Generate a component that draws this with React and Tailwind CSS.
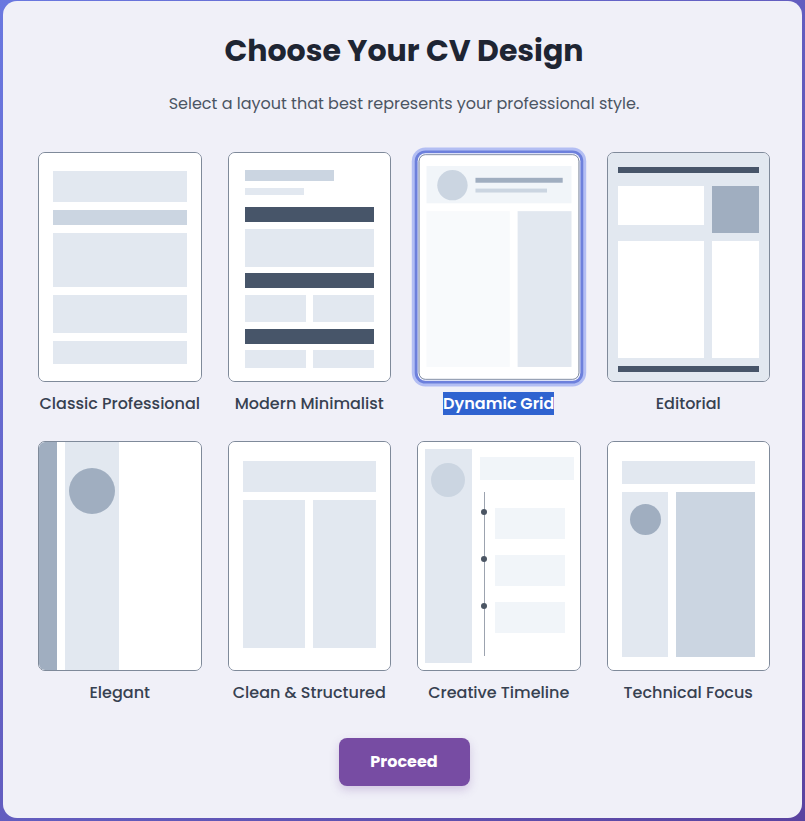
import React from "react";

const designs = [
  { id: "classic", name: "Classic Professional" },
  { id: "modern", name: "Modern Minimalist" },
  { id: "dynamic", name: "Dynamic Grid" },
  { id: "editorial", name: "Editorial" },
  { id: "elegant", name: "Elegant" },
  { id: "clean", name: "Clean & Structured" },
  { id: "timeline", name: "Creative Timeline" },
  { id: "technical", name: "Technical Focus" },
];

function ClassicPreview() {
  return (
    <div className="flex h-full flex-col gap-2 bg-white px-[14px] pt-[18px]">
      <div className="h-[31px] bg-[#e2e8f0]" />
      <div className="h-[15px] bg-[#cbd5e1]" />
      <div className="h-[54px] bg-[#e2e8f0]" />
      <div className="h-[38px] bg-[#e2e8f0]" />
      <div className="h-[23px] bg-[#e2e8f0]" />
    </div>
  );
}

function ModernPreview() {
  return (
    <div className="flex h-full flex-col bg-white px-[16px] pt-[17px]">
      <div className="h-[11px] w-[89px] bg-[#cbd5e1]" />
      <div className="mt-[7px] h-[7px] w-[59px] bg-[#e2e8f0]" />
      <div className="mt-[12px] h-[15px] bg-[#475569]" />
      <div className="mt-[7px] h-[38px] bg-[#e2e8f0]" />
      <div className="mt-[6px] h-[15px] bg-[#475569]" />
      <div className="mt-[7px] grid h-[27px] grid-cols-2 gap-[7px]">
        <div className="bg-[#e2e8f0]" />
        <div className="bg-[#e2e8f0]" />
      </div>
      <div className="mt-[7px] h-[15px] bg-[#475569]" />
      <div className="mt-[6px] grid h-[18px] grid-cols-2 gap-[7px]">
        <div className="bg-[#e2e8f0]" />
        <div className="bg-[#e2e8f0]" />
      </div>
    </div>
  );
}

function DynamicPreview() {
  return (
    <div className="flex h-full flex-col bg-white px-[7px] pt-[11px]">
      <div className="flex h-[38px] items-center gap-[8px] bg-[#f1f5f9] px-[11px]">
        <div className="h-[31px] w-[31px] shrink-0 rounded-full bg-[#cbd5e1]" />
        <div className="flex flex-col gap-[6px]">
          <div className="h-[5px] w-[89px] bg-[#a0aec0]" />
          <div className="h-[4px] w-[73px] bg-[#cbd5e1]" />
        </div>
      </div>
      <div className="mt-[8px] flex h-[159px] gap-[8px]">
        <div className="w-[85px] bg-[#f8fafc]" />
        <div className="flex-1 bg-[#e2e8f0]" />
      </div>
    </div>
  );
}

function EditorialPreview() {
  return (
    <div className="flex h-full flex-col bg-[#e2e8f0] px-[10px] pt-[14px]">
      <div className="h-[6px] bg-[#475569]" />
      <div className="mt-[13px] grid grid-cols-[86px_47px] grid-rows-[47px_117px] gap-[8px]">
        <div className="h-[39px] bg-white" />
        <div className="bg-[#a0aec0]" />
        <div className="bg-white" />
        <div className="bg-white" />
      </div>
      <div className="mt-[8px] h-[6px] bg-[#475569]" />
    </div>
  );
}

function ElegantPreview() {
  return (
    <div className="flex h-full bg-white">
      <div className="w-[18px] bg-[#a0aec0]" />
      <div className="ml-[8px] w-[54px] bg-[#e2e8f0] pl-[4px] pt-[26px]">
        <div className="h-[46px] w-[46px] rounded-full bg-[#a0aec0]" />
      </div>
    </div>
  );
}

function CleanPreview() {
  return (
    <div className="flex h-full flex-col bg-white px-[14px] pt-[19px]">
      <div className="h-[31px] bg-[#e2e8f0]" />
      <div className="mt-[8px] grid h-[148px] grid-cols-2 gap-[8px]">
        <div className="bg-[#e2e8f0]" />
        <div className="bg-[#e2e8f0]" />
      </div>
    </div>
  );
}

function TimelinePreview() {
  return (
    <div className="flex h-full bg-white py-[7px] pl-[7px] pr-[6px]">
      <div className="w-[47px] bg-[#e2e8f0] pl-[6px] pt-[14px]">
        <div className="h-[34px] w-[34px] rounded-full bg-[#cbd5e1]" />
      </div>
      <div className="ml-[8px] flex flex-1 flex-col pt-[8px]">
        <div className="h-[23px] bg-[#f1f5f9]" />
        <div className="ml-[4px] mt-[12px] flex h-[164px] flex-col gap-[16px] border-l-[1.5px] border-[#9ca3af] pt-[16px]">
          {[0, 1, 2].map((i) => (
            <div key={i} className="flex items-start">
              <div className="-ml-[4px] mt-[1px] h-[6px] w-[6px] shrink-0 rounded-full bg-[#4b5563]" />
              <div className="ml-[8px] h-[31px] w-[70px] bg-[#f1f5f9]" />
            </div>
          ))}
        </div>
      </div>
    </div>
  );
}

function TechnicalPreview() {
  return (
    <div className="flex h-full flex-col bg-white px-[14px] pt-[19px]">
      <div className="h-[23px] bg-[#e2e8f0]" />
      <div className="mt-[8px] flex h-[165px] gap-[8px]">
        <div className="w-[46px] bg-[#e2e8f0] pl-[8px] pt-[12px]">
          <div className="h-[31px] w-[31px] rounded-full bg-[#a0aec0]" />
        </div>
        <div className="flex-1 bg-[#cbd5e1]" />
      </div>
    </div>
  );
}

const previews = {
  classic: ClassicPreview,
  modern: ModernPreview,
  dynamic: DynamicPreview,
  editorial: EditorialPreview,
  elegant: ElegantPreview,
  clean: CleanPreview,
  timeline: TimelinePreview,
  technical: TechnicalPreview,
};

export default function App() {
  const [selected, setSelected] = React.useState("dynamic");

  return (
    <div
      className="h-[821px] overflow-hidden bg-linear-to-br from-[#6a78e0] to-[#5a43a0] px-[3px] pb-[3px] pt-[1px]"
      style={{ fontFamily: '"Poppins", "Inter", "Noto Sans", sans-serif' }}
    >
      <div className="flex h-full flex-col items-center rounded-[14px] bg-[#f0f0f8] pl-[35px] pr-[32px] pt-[31px]">
        <h1 className="text-[30px] font-bold leading-[38px] text-[#1e2533]">Choose Your CV Design</h1>
        <p className="mt-[22px] text-[16px] leading-[24px] text-[#4b5563]">
          Select a layout that best represents your professional style.
        </p>

        <div className="mt-[36px] grid w-full grid-cols-4 gap-x-[26px] gap-y-[25px]">
          {designs.map((d) => {
            const Preview = previews[d.id];
            const active = d.id === selected;
            return (
              <button
                key={d.id}
                type="button"
                onClick={() => setSelected(d.id)}
                className="flex flex-col items-center"
              >
                <div
                  className={`h-[230px] w-full overflow-hidden rounded-[7px] border border-[#7f8a9a] ${
                    active
                      ? "scale-[0.98] shadow-[0_0_0_7px_#b3bef3] ring-[3px] ring-[#6d80dc] ring-offset-1 ring-offset-white"
                      : ""
                  }`}
                >
                  <Preview />
                </div>
                <div className="mt-[10px] text-[16px] font-medium leading-[24px] text-[#374151]">
                  {active ? (
                    <span className="bg-[#2f63d0] font-semibold text-white">{d.name}</span>
                  ) : (
                    d.name
                  )}
                </div>
              </button>
            );
          })}
        </div>

        <button
          type="button"
          className="mt-[33px] h-[48px] w-[131px] rounded-lg bg-[#774ca3] text-[16px] font-bold text-white shadow-[0_4px_10px_rgba(118,75,162,0.25)]"
        >
          Proceed
        </button>
      </div>
    </div>
  );
}
